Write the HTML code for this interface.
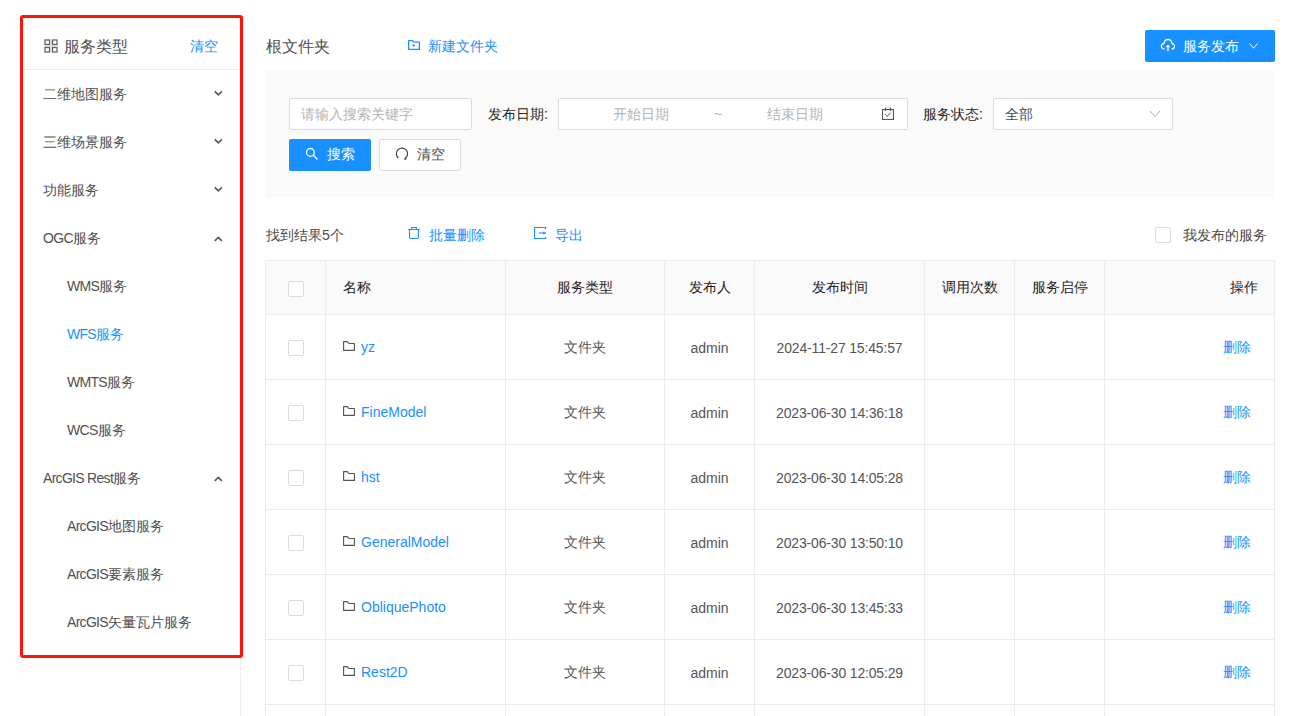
<!DOCTYPE html>
<html><head><meta charset="utf-8">
<style>
*{box-sizing:border-box;margin:0;padding:0}
html,body{width:1312px;height:716px;overflow:hidden;background:#fff;font-family:"Liberation Sans",sans-serif;font-size:14px;color:#606266}
.abs{position:absolute}
.t{position:absolute;white-space:nowrap;line-height:20px}
.blue{color:#1890ff}
#sidebar-line{left:240px;top:20px;width:1px;height:696px;background:#eee}
#redbox{left:20px;top:15px;width:223px;height:643px;border:3px solid #ff140a;border-radius:3px}
.menu{color:#505050}
.l{letter-spacing:-0.7px}
.chev{position:absolute;width:12px;height:12px}
.panel{left:265px;top:70px;width:1010px;height:128px;background:#fafafa}
.inp{position:absolute;background:#fff;border:1px solid #dcdcdc;border-radius:2px;height:32px}
.ph{color:#b4b4b4}
.lbl{color:#262626}
.btn{position:absolute;border-radius:2px;height:33px}
table{border-collapse:collapse;position:absolute;left:265px;top:260px;table-layout:fixed}
td,th{border:1px solid #ececec;font-weight:normal;text-align:center;height:65px;color:#555;padding-top:2px}
th{height:54px;background:#fafafa;color:#222;padding-top:1px}
.cb{display:inline-block;width:16px;height:16px;border:1px solid #dcdcdc;border-radius:2px;background:#fff;vertical-align:middle}
.dt{letter-spacing:-0.16px}
.nm{text-align:left;padding-left:17px}
.fold{position:relative;top:-2px;margin-right:6px}
.op{text-align:right;padding-right:23px}
a{color:#1890ff;text-decoration:none}
.nm a{position:relative;top:-1px}
</style></head><body>
<div class="abs" id="sidebar-line"></div>

<!-- sidebar -->
<div class="abs" style="left:23px;top:69px;width:217px;height:1px;background:#eee"></div>
<svg class="abs" style="left:44px;top:39px" width="14" height="14" viewBox="0 0 14 14" fill="none" stroke="#666" stroke-width="1.3"><path d="M7 1 V13 M1 7 H13" stroke="#d4d4d4" stroke-width="1"/><rect x="1" y="1" width="4.5" height="4.5"/><rect x="8.5" y="1" width="4.5" height="4.5"/><rect x="1" y="8.5" width="4.5" height="4.5"/><rect x="8.5" y="8.5" width="4.5" height="4.5"/></svg>
<div class="t" style="left:64px;top:37px;font-size:16px;color:#515151">服务类型</div>
<div class="t blue" style="left:190px;top:36px">清空</div>

<div class="t menu" style="left:43px;top:84px">二维地图服务</div>
<div class="t menu" style="left:43px;top:132px">三维场景服务</div>
<div class="t menu" style="left:43px;top:180px">功能服务</div>
<div class="t menu" style="left:43px;top:228px"><span class="l">OGC</span>服务</div>
<div class="t menu" style="left:67px;top:276px"><span class="l">WMS</span>服务</div>
<div class="t blue" style="left:67px;top:324px"><span class="l">WFS</span>服务</div>
<div class="t menu" style="left:67px;top:372px"><span class="l">WMTS</span>服务</div>
<div class="t menu" style="left:67px;top:420px"><span class="l">WCS</span>服务</div>
<div class="t menu" style="left:43px;top:468px"><span class="l">ArcGIS Rest</span>服务</div>
<div class="t menu" style="left:67px;top:516px"><span class="l">ArcGIS</span>地图服务</div>
<div class="t menu" style="left:67px;top:564px"><span class="l">ArcGIS</span>要素服务</div>
<div class="t menu" style="left:67px;top:612px"><span class="l">ArcGIS</span>矢量瓦片服务</div>

<svg class="abs" style="left:214px;top:90px" width="9" height="7" viewBox="0 0 9 7"><path d="M0.8 1.4 L4.3 4.9 L7.8 1.4" fill="none" stroke="#555" stroke-width="1.6"/></svg>
<svg class="abs" style="left:214px;top:138px" width="9" height="7" viewBox="0 0 9 7"><path d="M0.8 1.4 L4.3 4.9 L7.8 1.4" fill="none" stroke="#555" stroke-width="1.6"/></svg>
<svg class="abs" style="left:214px;top:186px" width="9" height="7" viewBox="0 0 9 7"><path d="M0.8 1.4 L4.3 4.9 L7.8 1.4" fill="none" stroke="#555" stroke-width="1.6"/></svg>
<svg class="abs" style="left:214px;top:236px" width="9" height="7" viewBox="0 0 9 7"><path d="M0.8 4.9 L4.3 1.4 L7.8 4.9" fill="none" stroke="#555" stroke-width="1.6"/></svg>
<svg class="abs" style="left:214px;top:476px" width="9" height="7" viewBox="0 0 9 7"><path d="M0.8 4.9 L4.3 1.4 L7.8 4.9" fill="none" stroke="#555" stroke-width="1.6"/></svg>

<div class="abs" id="redbox"></div>

<!-- top bar -->
<div class="t" style="left:266px;top:37px;font-size:16px;color:#515151">根文件夹</div>
<svg class="abs" style="left:408px;top:40px" width="12" height="10" viewBox="0 0 12 10" fill="none" stroke="#1890ff" stroke-width="1.2" stroke-linejoin="round"><path d="M0.6 0.6 H4.5 L5.9 2.1 H11.4 V9.4 H0.6 Z"/><path d="M5.6 4.2 V6.8 M4.3 5.5 H6.9" stroke-width="1.1"/></svg>
<div class="t blue" style="left:428px;top:36px">新建文件夹</div>

<div class="btn" style="left:1145px;top:30px;width:130px;height:32px;background:#1890ff"></div>
<svg class="abs" style="left:1160px;top:38px" width="16" height="14" viewBox="0 0 16 13" fill="none" stroke="#fff" stroke-width="1.3"><path d="M4.5 10.5 C2 10.5 1 8.5 1.5 7 C2 5.5 3.2 5 4 5 C4.3 2.5 6 1 8 1 C10 1 11.7 2.5 12 5 C13 5 14.5 6 14.5 7.8 C14.5 9.5 13 10.5 11.5 10.5"/><path d="M8 12.8 V6.5"/><path d="M6.3 8.4 L8 6.4 L9.7 8.4 Z" fill="#fff" stroke-width="0.8"/></svg>
<div class="t" style="left:1183px;top:36px;color:#fff">服务发布</div>
<svg class="abs" style="left:1249px;top:43px" width="9" height="6" viewBox="0 0 9 6"><path d="M0.5 0.5 L4.5 5.2 L8.5 0.5" fill="none" stroke="#fff" stroke-width="1"/></svg>

<!-- filter panel -->
<div class="abs panel"></div>
<div class="inp" style="left:289px;top:98px;width:183px"></div>
<div class="t ph" style="left:301px;top:104px">请输入搜索关键字</div>
<div class="t lbl" style="left:488px;top:104px">发布日期:</div>
<div class="inp" style="left:558px;top:98px;width:350px"></div>
<div class="t ph" style="left:613px;top:104px">开始日期</div>
<div class="t ph" style="left:714px;top:104px">~</div>
<div class="t ph" style="left:767px;top:104px">结束日期</div>
<svg class="abs" style="left:882px;top:107px" width="12" height="13" viewBox="0 0 12 13" fill="none" stroke="#555" stroke-width="1.1"><rect x="0.55" y="2.55" width="10.9" height="9.9"/><path d="M3.5 0.5 V4 M8.5 0.5 V4"/><path d="M3.2 7.2 L5.2 9.3 L8.6 5.6" stroke-width="1"/></svg>
<div class="t lbl" style="left:923px;top:104px">服务状态:</div>
<div class="inp" style="left:993px;top:98px;width:180px"></div>
<div class="t" style="left:1005px;top:104px;color:#4a4a4a">全部</div>
<svg class="abs" style="left:1149px;top:110px" width="12" height="8" viewBox="0 0 12 8"><path d="M1 1 L6 6.5 L11 1" fill="none" stroke="#aaa" stroke-width="1"/></svg>

<div class="btn" style="left:289px;top:139px;width:82px;height:32px;background:#1890ff"></div>
<svg class="abs" style="left:305px;top:147px" width="14" height="14" viewBox="0 0 14 14" fill="none" stroke="#fff" stroke-width="1.3"><circle cx="5.4" cy="5.4" r="3.9"/><path d="M8.3 8.3 L12 12" stroke-linecap="round"/></svg>
<div class="t" style="left:327px;top:144px;color:#fff">搜索</div>
<div class="btn" style="left:379px;top:139px;width:82px;height:32px;background:#fff;border:1px solid #dcdcdc"></div>
<svg class="abs" style="left:395px;top:147px" width="14" height="14" viewBox="0 0 14 14" fill="none" stroke="#444" stroke-width="1.2"><path d="M3.4 11 A5.6 5.6 0 1 1 10 11.4"/><path d="M9.2 12.2 L10.9 10.3 L11.1 12.4 Z" fill="#444" stroke-width="0.6"/></svg>
<div class="t" style="left:417px;top:144px;color:#4a4a4a">清空</div>

<!-- toolbar -->
<div class="t" style="left:266px;top:225px;color:#4a4a4a">找到结果5个</div>
<svg class="abs" style="left:408px;top:226px" width="12" height="14" viewBox="0 0 12 14" fill="none" stroke="#1890ff" stroke-width="1.1"><path d="M0 3.5 H12 M3.5 3.5 V1.5 H8.5 V3.5 M1.5 3.5 V11 Q1.5 12.5 3 12.5 H9 Q10.5 12.5 10.5 11 V3.5"/></svg>
<div class="t blue" style="left:429px;top:225px">批量删除</div>
<svg class="abs" style="left:534px;top:227px" width="13" height="13" viewBox="0 0 13 13" fill="none" stroke="#1890ff" stroke-width="1.15"><path d="M11.5 2 V0.5 H0.5 V11.5 H11.5 V10"/><path d="M5 6 H10" stroke-width="1.1"/><path d="M9.6 4.7 L12 6 L9.6 7.3 Z" fill="#1890ff" stroke-width="0.5"/></svg>
<div class="t blue" style="left:555px;top:225px">导出</div>

<div class="abs" style="left:1155px;top:227px;width:16px;height:16px;border:1px solid #dcdcdc;border-radius:2px"></div>
<div class="t" style="left:1183px;top:225px;color:#4a4a4a">我发布的服务</div>

<!-- table -->
<table>
<colgroup><col style="width:60px"><col style="width:180px"><col style="width:159px"><col style="width:90px"><col style="width:170px"><col style="width:90px"><col style="width:90px"><col style="width:170px"></colgroup>
<tr><th><span class="cb"></span></th><th class="nm">名称</th><th>服务类型</th><th>发布人</th><th>发布时间</th><th>调用次数</th><th>服务启停</th><th class="op" style="padding-right:16px">操作</th></tr>
<tr><td><span class="cb" style="position:relative;top:-1px"></span></td><td class="nm"><svg class="fold" width="12" height="10" viewBox="0 0 12 10" fill="none" stroke="#555" stroke-width="1.1" stroke-linejoin="round"><path d="M0.6 0.6 H4.4 L5.8 2.55 H11.4 V9.4 H0.6 Z"/></svg><a>yz</a></td><td>文件夹</td><td>admin</td><td class="dt">2024-11-27 15:45:57</td><td></td><td></td><td class="op"><a>删除</a></td></tr>
<tr><td><span class="cb" style="position:relative;top:-1px"></span></td><td class="nm"><svg class="fold" width="12" height="10" viewBox="0 0 12 10" fill="none" stroke="#555" stroke-width="1.1" stroke-linejoin="round"><path d="M0.6 0.6 H4.4 L5.8 2.55 H11.4 V9.4 H0.6 Z"/></svg><a>FineModel</a></td><td>文件夹</td><td>admin</td><td class="dt">2023-06-30 14:36:18</td><td></td><td></td><td class="op"><a>删除</a></td></tr>
<tr><td><span class="cb" style="position:relative;top:-1px"></span></td><td class="nm"><svg class="fold" width="12" height="10" viewBox="0 0 12 10" fill="none" stroke="#555" stroke-width="1.1" stroke-linejoin="round"><path d="M0.6 0.6 H4.4 L5.8 2.55 H11.4 V9.4 H0.6 Z"/></svg><a>hst</a></td><td>文件夹</td><td>admin</td><td class="dt">2023-06-30 14:05:28</td><td></td><td></td><td class="op"><a>删除</a></td></tr>
<tr><td><span class="cb" style="position:relative;top:-1px"></span></td><td class="nm"><svg class="fold" width="12" height="10" viewBox="0 0 12 10" fill="none" stroke="#555" stroke-width="1.1" stroke-linejoin="round"><path d="M0.6 0.6 H4.4 L5.8 2.55 H11.4 V9.4 H0.6 Z"/></svg><a>GeneralModel</a></td><td>文件夹</td><td>admin</td><td class="dt">2023-06-30 13:50:10</td><td></td><td></td><td class="op"><a>删除</a></td></tr>
<tr><td><span class="cb" style="position:relative;top:-1px"></span></td><td class="nm"><svg class="fold" width="12" height="10" viewBox="0 0 12 10" fill="none" stroke="#555" stroke-width="1.1" stroke-linejoin="round"><path d="M0.6 0.6 H4.4 L5.8 2.55 H11.4 V9.4 H0.6 Z"/></svg><a>ObliquePhoto</a></td><td>文件夹</td><td>admin</td><td class="dt">2023-06-30 13:45:33</td><td></td><td></td><td class="op"><a>删除</a></td></tr>
<tr><td><span class="cb" style="position:relative;top:-1px"></span></td><td class="nm"><svg class="fold" width="12" height="10" viewBox="0 0 12 10" fill="none" stroke="#555" stroke-width="1.1" stroke-linejoin="round"><path d="M0.6 0.6 H4.4 L5.8 2.55 H11.4 V9.4 H0.6 Z"/></svg><a>Rest2D</a></td><td>文件夹</td><td>admin</td><td class="dt">2023-06-30 12:05:29</td><td></td><td></td><td class="op"><a>删除</a></td></tr>
<tr><td><span class="cb" style="position:relative;top:-1px"></span></td><td class="nm"></td><td></td><td></td><td></td><td></td><td></td><td></td></tr>
</table>
</body></html>
